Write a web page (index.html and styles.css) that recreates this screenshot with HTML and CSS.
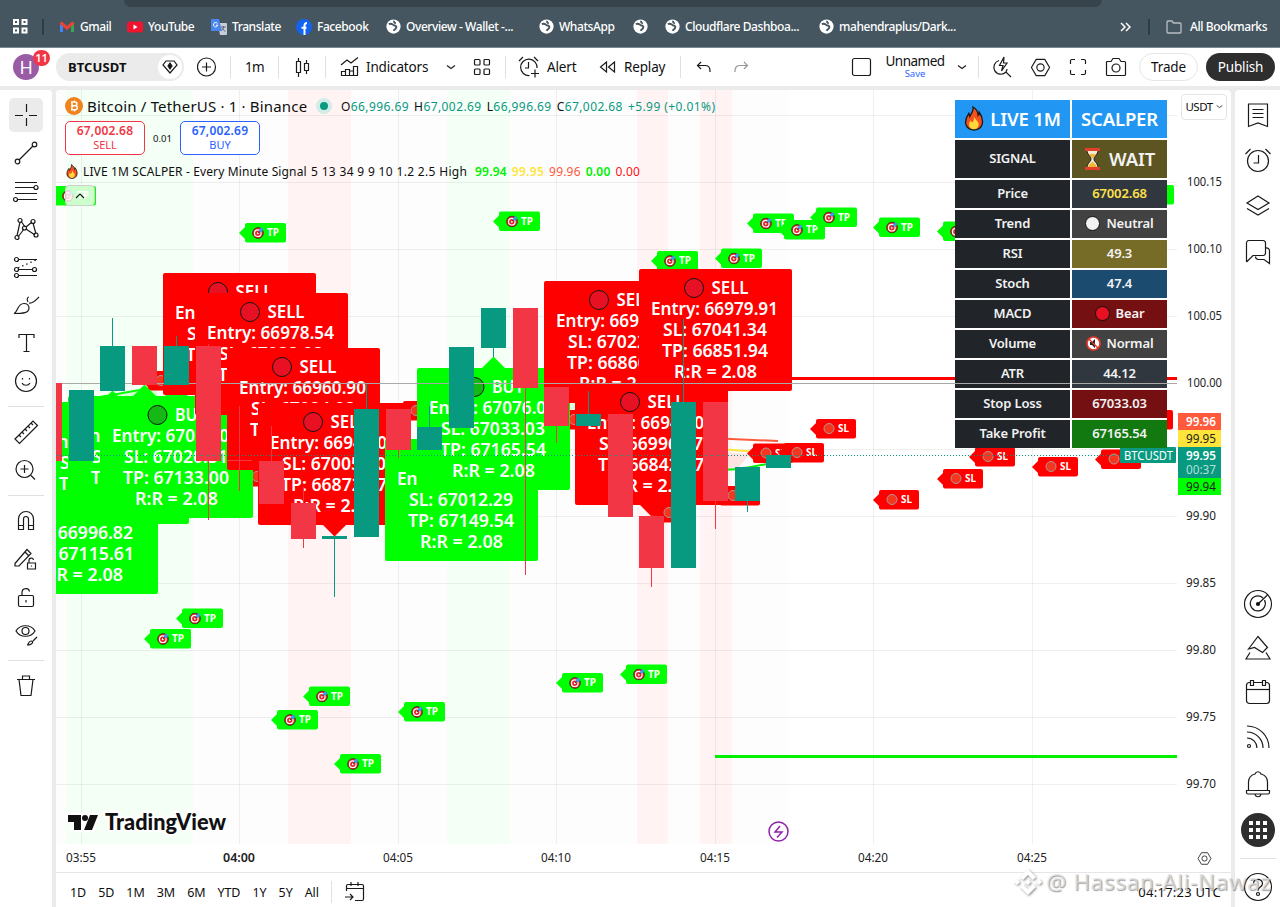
FILE: index.html
```html
<!DOCTYPE html>
<html lang="en">
  <head>
    <meta charset="UTF-8" />
    <title>BTCUSDT 67,002.68 - Unnamed</title>
    <link rel="stylesheet" href="styles.css">
  </head>
  <body>
    <!-- Shared symbols -->
    <svg class="defs">
      <symbol id="globe" viewBox="0 0 16 16">
        <circle cx="8" cy="8" r="7.6" fill="#fff" />
        <path d="M3 5.500c3-1.500 4 .5 5 1s3.500.5 3 2.500-2 2-3 3.500M9 2c-1 1.500 0 2.500 1.500 2.500" fill="none" stroke="#455660" stroke-width="2" />
      </symbol>
      <symbol id="fire" viewBox="0 0 18 24">
        <path d="M8 1c5 3 5 6 5 8 1-1 1-2 1-3 3 4 3.500 8 3 11-1 4-4 6-8 6s-7-2-8-6c-.5-4 1-7 3-10l1 3C6 7 9 5 8 1z" fill="#f4511e" stroke="#1a1a1a" stroke-width="1.300" />
        <path d="M9 10c1 3 5 5 4.500 8-.5 3-2.500 4.300-4.500 4.300S4.500 21 4.200 18c0-2 1-3 1.500-4l1.500 2c1-1 2-3 1.800-6z" fill="#ffd83b" />
      </symbol>
      <symbol id="target" viewBox="0 0 12 12">
        <circle cx="6" cy="6" r="5.400" fill="#e5242a" stroke="#222" stroke-width=".7" />
        <circle cx="5.800" cy="6.200" r="3.300" fill="none" stroke="#fff" stroke-width="1.200" />
        <circle cx="5.800" cy="6.200" r="1" fill="#fff" />
        <path d="M6 6l3-3" stroke="#222" stroke-width=".8" />
        <path d="M6.500 4L9 .5l2.500 1.500L9.500 5.500z" fill="#3a9be8" />
      </symbol>
      <symbol id="chev" viewBox="0 0 10 10">
        <path d="M1 3.500l4 3 4-3" fill="none" stroke="#222" stroke-width="1.200" />
      </symbol>
      <symbol id="hex" viewBox="0 0 22 22">
        <path d="M6.500 2.500h9l5 8.500-5 8.500h-9L1.500 11z" />
        <circle cx="11" cy="11" r="3.800" />
      </symbol>
    </svg>

    <!-- Browser bookmarks -->
    <div class="bookmarks">
      <div class="tabstrip"></div>
      <svg width="15" height="15" viewBox="0 0 15 15"><g fill="none" stroke="#fff" stroke-width="2"><path d="M1 1h4v4H1zM9.500 1h4v4h-4zM1 9.500h4v4H1zM9.500 9.500h4v4h-4z" /></g></svg>
      <i class="bm-sep"></i>
      <div class="bm">
        <svg width="16" height="16" viewBox="0 0 16 16"><path d="M2.500 13V4" stroke="#4285f4" stroke-width="3" /><path d="M13.500 13V4" stroke="#34a853" stroke-width="3" /><path d="M1.500 3.500L8 9l6.500-5.500" fill="none" stroke="#ea4335" stroke-width="3" /></svg>
        <span>Gmail</span>
      </div>
      <div class="bm">
        <svg width="16" height="16" viewBox="0 0 16 16"><rect y="2.500" width="16" height="11" rx="2.500" fill="#f0142f" /><path d="M6.500 5.500v5l4-2.500z" fill="#fff" /></svg>
        <span>YouTube</span>
      </div>
      <div class="bm">
        <svg width="16" height="16" viewBox="0 0 16 16"><path d="M7 4h8a1 1 0 011 1v10a1 1 0 01-1 1H9z" fill="#c9ced4" /><path d="M10 8h5M12.500 7v1c0 2-1 3-2.500 4M11 9.500l3.500 3" stroke="#667" fill="none" /><path d="M1 0h7l3 12H1a1 1 0 01-1-1V1a1 1 0 011-1z" fill="#4a86f0" /><path d="M6.500 4.500a2.200 2.200 0 10.300 1.700H5" stroke="#fff" fill="none" /></svg>
        <span>Translate</span>
      </div>
      <div class="bm">
        <svg width="16" height="16" viewBox="0 0 16 16"><circle cx="8" cy="8" r="8" fill="#1263f0" /><path d="M8.500 16V6.500c0-1.800.8-2.500 2.500-2.500M5.500 8.800h5" stroke="#fff" stroke-width="2" fill="none" /></svg>
        <span>Facebook</span>
      </div>
      <div class="bm"><svg width="15" height="15"><use href="#globe" /></svg><span>Overview - Wallet -...</span></div>
      <div class="bm"><svg width="15" height="15"><use href="#globe" /></svg><span>WhatsApp</span></div>
      <div class="bm"><svg width="15" height="15"><use href="#globe" /></svg></div>
      <div class="bm"><svg width="15" height="15"><use href="#globe" /></svg><span>Cloudflare Dashboa...</span></div>
      <div class="bm"><svg width="15" height="15"><use href="#globe" /></svg><span>mahendraplus/Dark...</span></div>
      <svg width="12" height="10" viewBox="0 0 12 10"><path d="M2 1l4 4-4 4M7 1l4 4-4 4" fill="none" stroke="#fff" stroke-width="1.500" /></svg>
      <i class="bm-sep"></i>
      <div class="bm bm-all">
        <svg width="16" height="14" viewBox="0 0 16 14"><path d="M1 2a1 1 0 011-1h4l1.500 2H14a1 1 0 011 1v8a1 1 0 01-1 1H2a1 1 0 01-1-1z" fill="none" stroke="#b9bfc3" stroke-width="1.300" /></svg>
        <span>All Bookmarks</span>
      </div>
    </div>

    <!-- Top toolbar -->
    <div class="toolbar">
      <div class="avatar">H<span class="badge">11</span></div>
      <div class="symbol-pill">
        <b>BTCUSDT</b>
        <span class="gem"><svg class="ico" width="16" height="14" viewBox="0 0 16 14"><path d="M4 1h8l3 4-7 8-7-8z" /><path d="M8 3l2 3-2 3-2-3z" fill="#111" /></svg></span>
      </div>
      <svg class="ico" width="20" height="20" viewBox="0 0 20 20"><circle cx="9.500" cy="10" r="9" /><path d="M9.500 5.500v9M5 10h9" /></svg>
      <i class="sep"></i>
      <span class="interval">1m</span>
      <i class="sep"></i>
      <svg class="ico" width="17" height="20" viewBox="0 0 17 20"><path d="M2.500 4.500h4v11h-4zM4.500 1v3.500M4.500 15.500V20M10.500 6.500h4v7h-4zM12.500 3v3.500M12.500 13.500V17" /></svg>
      <i class="sep"></i>
      <div class="tbtn">
        <svg class="ico" width="19" height="20" viewBox="0 0 19 20"><path d="M1 8l6-5 4 3 7-5.500M1.500 18.500v-4h4v4zM5.500 18.500v-6h4v6zM9.500 18.500V14h4v4.500zM13.500 18.500V9.500h4v9z" /></svg>
        <span class="t-ind">Indicators</span>
      </div>
      <svg width="10" height="10"><use href="#chev" /></svg>
      <svg class="ico" width="18" height="18" viewBox="0 0 18 18"><rect x="1.500" y="1.500" width="5.500" height="5.500" rx="1" /><rect x="11" y="1.500" width="5.500" height="5.500" rx="1" /><rect x="1.500" y="11" width="5.500" height="5.500" rx="1" /><rect x="11" y="11" width="5.500" height="5.500" rx="1" /></svg>
      <i class="sep"></i>
      <div class="tbtn">
        <svg class="ico" width="22" height="22" viewBox="0 0 22 22"><path d="M11.500 19.500A8.200 8.200 0 1119 12M10.500 6v6H7M1 5l4-4M16 1l4 4M17 13.500v8M13 17.500h8" /></svg>
        <span>Alert</span>
      </div>
      <div class="tbtn">
        <svg class="ico" width="18" height="14" viewBox="0 0 18 14"><path d="M7.500 2v10L1.500 7zM15.500 2v10l-6-5z" /></svg>
        <span>Replay</span>
      </div>
      <i class="sep"></i>
      <svg class="ico" width="15" height="14" viewBox="0 0 15 14"><path d="M5 2L1.500 5.500 5 9M1.500 5.500H9c3 0 5 2 5 5V12" /></svg>
      <svg class="ico faded" width="15" height="14" viewBox="0 0 15 14"><path d="M10 2l3.500 3.500L10 9M13.500 5.500H6c-3 0-5 2-5 5V12" /></svg>
      <svg class="ico" width="21" height="20" viewBox="0 0 21 20"><rect x="1.500" y="1.500" width="18" height="17" rx="2" /></svg>
      <div class="layout-name"><span>Unnamed</span><a>Save</a></div>
      <svg width="10" height="10"><use href="#chev" /></svg>
      <i class="sep"></i>
      <svg class="ico" width="20" height="22" viewBox="0 0 20 22"><path d="M7 4.500a7 7 0 107 11.500l5 5M15 13a7 7 0 01-1 3M12 1L7.500 9.500h3.500L9.500 15l5.500-8h-3.500z" /></svg>
      <svg class="ico" width="21" height="21"><use href="#hex" /></svg>
      <svg class="ico" width="18" height="18" viewBox="0 0 18 18"><path d="M1.500 6V3a1.500 1.500 0 011.500-1.500h3M12 1.500h3A1.500 1.500 0 0116.500 3v3M16.500 12v3a1.500 1.500 0 01-1.500 1.500h-3M6 16.500H3A1.500 1.500 0 011.500 15v-3" /></svg>
      <svg class="ico" width="22" height="20" viewBox="0 0 22 20"><path d="M2.500 4.500H6L8 1.500h6l2 3h3.500a1 1 0 011 1v12a1 1 0 01-1 1h-17a1 1 0 01-1-1v-12a1 1 0 011-1z" /><circle cx="11" cy="11" r="4" /></svg>
      <div class="trade">Trade</div>
      <div class="publish">Publish</div>
    </div>

    <div class="workspace">
      <!-- Drawing tools -->
      <div class="rail rail-left">
        <div class="tool active"><svg class="ico" width="26" height="26" viewBox="0 0 26 26"><path d="M13.500 2v8M13.500 16v8M2 13.500h8M16 13.500h8" /></svg></div>
        <div class="tool"><svg class="ico" width="26" height="26" viewBox="0 0 26 26"><circle cx="4.500" cy="21.500" r="2.300" /><circle cx="21.500" cy="4.500" r="2.300" /><path d="M6 20L20 6" /></svg></div>
        <div class="tool"><svg class="ico" width="26" height="26" viewBox="0 0 26 26"><path d="M2 4.500h22M2 9.500h19M2 15.500h22M5 21.500h19" /><circle cx="23" cy="9.500" r="2" /><circle cx="2.500" cy="21.500" r="2" /></svg></div>
        <div class="tool"><svg class="ico" width="26" height="26" viewBox="0 0 26 26"><path d="M4 20L7 6M8 5l4 6M13 11l6-5M20 7l3 11M5 21l6-8M13 13l9 6" /><circle cx="4" cy="21.500" r="2" /><circle cx="7" cy="4.500" r="2" /><circle cx="11.500" cy="12" r="2" /><circle cx="20" cy="5.500" r="2" /><circle cx="23" cy="19" r="2" /></svg></div>
        <div class="tool"><svg class="ico" width="26" height="26" viewBox="0 0 26 26"><path d="M5 5.500h19M5 15.500h15M5 21.500h19" /><path d="M5 14L23 6" stroke-dasharray="1.500 3" /><circle cx="3.500" cy="5.500" r="2" /><circle cx="3.500" cy="15.500" r="2" /><circle cx="21.500" cy="15.500" r="2" /><circle cx="3.500" cy="21.500" r="2" /></svg></div>
        <div class="tool"><svg class="ico" width="28" height="26" viewBox="0 0 28 26"><path d="M2 21.500c4-1 3-10 10-10 3 0 5 2 5 4.500 0 5-6 5.500-15 5.500zM16 10c-2-3 0-5 1-5M17 11c4 1 8-4 10-6" /></svg></div>
        <div class="tool"><svg class="ico" width="26" height="26" viewBox="0 0 26 26"><path d="M6 8V4.500h15V8M13.500 4.500v17M10.500 21.500h6" /></svg></div>
        <div class="tool"><svg class="ico" width="26" height="26" viewBox="0 0 26 26"><circle cx="13" cy="13" r="10.500" /><path d="M9 15c1.500 3 6.500 3 8 0M9.500 10v1.500M16.500 10v1.500" /></svg></div>
        <i class="rule"></i>
        <div class="tool"><svg class="ico" width="26" height="26" viewBox="0 0 26 26"><path d="M2 20L20 2l4.500 4.500-18 18zM6 16l2 2M9 13l2 2M12 10l2 2M15 7l2 2M18 4l2 2" /></svg></div>
        <div class="tool"><svg class="ico" width="26" height="26" viewBox="0 0 26 26"><circle cx="11.500" cy="12" r="8.500" /><path d="M18 18.500l4 4M11.500 8v8M7.500 12h8" /></svg></div>
        <i class="rule"></i>
        <div class="tool"><svg class="ico" width="26" height="26" viewBox="0 0 26 26"><path d="M5.500 21.500V11a7.500 7.500 0 0115 0v10.500h-5V11a2.500 2.500 0 00-5 0v10.500zM5.500 17.500h5M15.500 17.500h5" /></svg></div>
        <div class="tool"><svg class="ico" width="26" height="26" viewBox="0 0 26 26"><path d="M2 17.500L14 3.500l4 4L6 20H2zM12 6l4 4M14.500 17h8v6h-8zM16 17v-2.500c0-3 4-3 4.500-.5M18.500 19.500v1" /></svg></div>
        <div class="tool"><svg class="ico" width="26" height="26" viewBox="0 0 26 26"><rect x="5.500" y="11.500" width="15" height="11" rx="1.500" /><path d="M9 11.500V8.500c0-5 7-5 7.500-1M13 16v2.500" /></svg></div>
        <div class="tool"><svg class="ico" width="26" height="26" viewBox="0 0 26 26"><path d="M3 9c4-7 15-7 19 0-4 7-15 7-19 0z" /><circle cx="12.500" cy="9" r="3.500" /><path d="M14 23c2 0 1-4 4-4 3 0 2 4-4 4zM20 19l4-4" /></svg></div>
        <i class="rule"></i>
        <div class="tool"><svg class="ico" width="26" height="26" viewBox="0 0 26 26"><path d="M4 6.500h18M6 6.500L8 22.500h10L20 6.500M9.500 6.500V3h7v3.500" /></svg></div>
      </div>

      <!-- Chart -->
      <div class="chart">
        <div class="canvas">
          <svg id="plot" viewBox="56 90 1175 782"></svg>

          <div class="legend">
            <div class="legend-title">
              <svg width="18" height="18" viewBox="0 0 18 18"><circle cx="9" cy="9" r="9" fill="#f0831e" /><path d="M7 4.500v9M6 5h4c2.500 0 2.500 3.700 0 3.700H7h3.500c2.500 0 2.500 4-.5 4H6M9.500 3.500v2M9.500 12.500v2" fill="none" stroke="#fff" stroke-width="1.500" /></svg>
              <span class="pair">Bitcoin / TetherUS · 1 · Binance</span>
              <i class="dot"></i>
              <span class="ohlc">O<em>66,996.69</em></span>
              <span class="ohlc">H<em>67,002.69</em></span>
              <span class="ohlc">L<em>66,996.69</em></span>
              <span class="ohlc">C<em>67,002.68</em></span>
              <span class="ohlc"><em>+5.99 (+0.01%)</em></span>
            </div>
            <div class="legend-trade">
              <div class="quote sell"><b>67,002.68</b><span>SELL</span></div>
              <span class="spread">0.01</span>
              <div class="quote buy"><b>67,002.69</b><span>BUY</span></div>
            </div>
            <div class="legend-study">
              <svg width="12" height="15"><use href="#fire" /></svg>
              <span class="study-name">LIVE 1M SCALPER - Every Minute Signal</span>
              <span class="study-args">5 13 34 9 9 10 1.2 2.5 High</span>
              <b class="lime">99.94</b>
              <b class="yellow">99.95</b>
              <span class="coral">99.96</span>
              <b class="lime">0.00</b>
              <span class="red">0.00</span>
            </div>
            <div class="collapse"><svg class="ico" width="10" height="6" viewBox="0 0 10 6"><path d="M1 5l4-4 4 4" /></svg></div>
          </div>

          <div class="currency">USDT <svg width="7" height="7"><use href="#chev" /></svg></div>

          <div class="panel">
            <div class="head"><svg width="20" height="25"><use href="#fire" /></svg>LIVE 1M</div><div class="head">SCALPER</div>
            <div class="sig">SIGNAL</div>
            <div class="sig olive big">
              <svg width="17" height="22" viewBox="0 0 17 22"><path d="M3 2c0 5 4 6 4 9s-4 4-4 9h11c0-5-4-6-4-9s4-4 4-9z" fill="#f3ead0" stroke="#222" /><path d="M5 6h7l-3 4h-1zM4 19c1-3 4-4 4.500-6 .5 2 3.500 3 4.500 6z" fill="#f2b632" /><path d="M1 0h15v3H1zM1 19h15v3H1z" fill="#e0402c" /></svg>
              WAIT
            </div>
            <div>Price</div><div class="slate gold">67002.68</div>
            <div>Trend</div><div class="grey"><i class="ball white"></i>Neutral</div>
            <div>RSI</div><div class="khaki">49.3</div>
            <div>Stoch</div><div class="blue">47.4</div>
            <div>MACD</div><div class="maroon"><i class="ball crimson"></i>Bear</div>
            <div>Volume</div>
            <div class="grey">
              <svg class="muted" width="15" height="15" viewBox="0 0 15 15"><circle cx="7.500" cy="7.500" r="6.500" fill="#fff" stroke="#e23a2e" stroke-width="1.700" /><path d="M4 6h2l3-3v9L6 9H4z" fill="#222" /><path d="M3 3l9 9" stroke="#e23a2e" stroke-width="1.500" /></svg>Normal
            </div>
            <div class="atr">ATR</div><div class="slate atr">44.12</div>
            <div>Stop Loss</div><div class="maroon">67033.03</div>
            <div>Take Profit</div><div class="green">67165.54</div>
          </div>
        </div>

        <div class="ranges">
          <span>1D</span><span>5D</span><span>1M</span><span>3M</span><span>6M</span><span>YTD</span><span>1Y</span><span>5Y</span><span>All</span>
          <i class="sep"></i>
          <svg class="ico" width="22" height="22" viewBox="0 0 22 22"><path d="M2.500 10V5a1.500 1.500 0 011.500-1.500h14A1.500 1.500 0 0119.500 5v13a1.500 1.500 0 01-1.500 1.500h-7M2.500 7.500h17M7 1v4M14 1v4M1 16h8M6 13l3 3-3 3" /></svg>
          <span class="clock">04:17:23 UTC</span>
        </div>
      </div>

      <!-- Widgets -->
      <div class="rail rail-right">
        <div class="tool"><svg class="ico" width="28" height="28" viewBox="0 0 28 28"><path d="M4.500 3h19v22.500L14 22l-9.500 3.500zM8.500 8.500h11M8.500 12.500h11M8.500 16.500h11" /></svg></div>
        <div class="tool"><svg class="ico" width="28" height="28" viewBox="0 0 28 28"><circle cx="14" cy="14" r="10.500" /><path d="M14.500 8v8H9.500M1.500 7l5-5M21.500 2l5 5" /></svg></div>
        <div class="tool"><svg class="ico" width="28" height="28" viewBox="0 0 28 28"><path d="M14 4l11 7-11 6.500L3 11zM3 16.500L14 23l11-6.500" /></svg></div>
        <div class="tool"><svg class="ico" width="28" height="28" viewBox="0 0 28 28"><path d="M2.500 24V4.500A2.500 2.500 0 015 2.500h14a2.500 2.500 0 012.500 2.500V15a2.500 2.500 0 01-2.500 2.500H9L2.500 24M21.500 10a3 3 0 014 3v12.500L20 21.500h-6a3 3 0 01-2.500-3" /></svg></div>
        <div class="tool push"><svg class="ico" width="30" height="30" viewBox="0 0 30 30"><circle cx="15" cy="15" r="13.500" /><path d="M20 9a7.500 7.500 0 101.500 2M15 15l9.500-9" /><circle cx="15" cy="15" r="1.500" fill="#111" /></svg></div>
        <div class="tool"><svg class="ico" width="28" height="28" viewBox="0 0 28 28"><path d="M4.500 15L14 2.500l9.500 11-5 5-8-5zM6 18.500l-4 6.500h24l-4-6.500" /></svg></div>
        <div class="tool"><svg class="ico" width="28" height="28" viewBox="0 0 28 28"><rect x="2.500" y="3.500" width="23" height="21" rx="3" /><path d="M2.500 10.500h23" /><path d="M6.500 1.500h3v5h-3zM18.500 1.500h3v5h-3z" fill="#fff" /></svg></div>
        <div class="tool rss"><svg class="ico" width="28" height="28" viewBox="0 0 28 28"><path d="M3 2a22 22 0 0122 22M3 8a16 16 0 0116 16M3 14a10 10 0 0110 10" /><circle cx="5" cy="22" r="1.500" /></svg></div>
        <div class="tool"><svg class="ico" width="28" height="30" viewBox="0 0 28 30"><path d="M2.500 20.500h23v2a1.500 1.500 0 01-1.500 1.500H4a1.500 1.500 0 01-1.500-1.500zM4.500 20.500V12c0-4 3-7 6.500-8 1-3 5-3 6 0 3.500 1 6.500 4 6.500 8v8.500M11 24.500c1 3 5 3 6 0" /></svg></div>
        <div class="tool"><svg width="34" height="34" viewBox="0 0 34 34"><circle cx="17" cy="17" r="17" fill="#2e2e2e" /><path d="M8 10h18M8 17h18M8 24h18" stroke="#fff" stroke-width="4" stroke-dasharray="4 3" /></svg></div>
        <i class="rule"></i>
        <div class="tool help"><svg class="ico" width="30" height="30" viewBox="0 0 30 30"><circle cx="15" cy="15" r="13.500" /><path d="M10.500 12c0-6 9-6 9-.5 0 3.500-4.500 3.500-4.500 7" /><circle cx="15" cy="22" r="1.500" /></svg></div>
      </div>
    </div>

    <div class="watermark">
      <svg width="28" height="28" viewBox="0 0 28 28"><path d="M6 9l8-8 8 8-3 3-5-5-5 5zM6 19l8 8 8-8-3-3-5 5-5-5zM0 14l3-3 3 3-3 3zM22 14l3-3 3 3-3 3zM11 14l3-3 3 3-3 3z" /></svg>
      <span>@ Hassan-Ali-Nawaz</span>
    </div>
    <script src="chart.js"></script>
  </body>
</html>
```

FILE: styles.css
```css
* {
  box-sizing: border-box;
}
body {
  margin: 0;
  width: 1280px;
  height: 907px;
  overflow: hidden;
  position: relative;
  display: flex;
  flex-direction: column;
  background: #ebebeb;
  color: #0f0f0f;
  font-family: 'Noto Sans', 'Open Sans', sans-serif;
}
svg {
  display: block;
  flex: none;
}
.defs {
  position: absolute;
  width: 0;
  height: 0;
}
.ico {
  fill: none;
  stroke: #1a1a1a;
  stroke-width: 1.2;
}
.faded {
  opacity: 0.45;
}

/* bookmarks */
.bookmarks {
  position: relative;
  height: 48px;
  flex: none;
  padding: 7px 0 1px 13px;
  background: #455660;
  border-bottom: 1px solid #7b8890;
  display: grid;
  grid-template-columns: 29px 17px 68px 84px 85px 90px 153px 94px 32px 154px 300px 29px 18px 1fr;
  align-items: center;
  color: #fff;
  font-size: 12px;
  font-weight: 500;
  letter-spacing: -0.42px;
}
.tabstrip {
  position: absolute;
  left: 124px;
  top: 0;
  width: 978px;
  height: 7px;
  background: #38444c;
  border-radius: 0 0 9px 9px;
}
.bm {
  display: flex;
  align-items: center;
  gap: 5px;
  white-space: nowrap;
}
.bm-all {
  gap: 8px;
}
.bm-sep {
  width: 2px;
  height: 16px;
  background: #2f3c44;
}

/* toolbar */
.toolbar {
  height: 38px;
  flex: none;
  padding-left: 13px;
  background: #fff;
  display: grid;
  grid-template-columns:
    43px 141px 33px 15px 33px 16px 31px 15px 106px 27px 32px 13px 81px 81px
    16px 38px 117px 35px 71px 21px 14px 38px 39px 36px 34px 67px 69px;
  align-items: center;
  font-size: 13.5px;
  letter-spacing: -0.15px;
}
.toolbar .sep,
.ranges .sep {
  width: 1px;
  height: 22px;
  background: #e0e0e0;
}
.interval {
  letter-spacing: -0.8px;
}
.avatar {
  position: relative;
  width: 26px;
  height: 26px;
  border-radius: 50%;
  background: #9a5ba5;
  color: #fff;
  font-size: 18px;
  line-height: 26px;
  text-align: center;
}
.badge {
  position: absolute;
  left: 20px;
  top: -4px;
  width: 17px;
  height: 16px;
  border-radius: 8px;
  background: #f23645;
  font-size: 11px;
  font-weight: 600;
  line-height: 16px;
}
.symbol-pill {
  width: 128px;
  height: 28px;
  padding: 0 2px 0 12px;
  border-radius: 14px;
  background: #ebebeb;
  display: flex;
  align-items: center;
  justify-content: space-between;
  font-size: 13px;
  letter-spacing: 0.1px;
}
.gem {
  width: 24px;
  height: 24px;
  border-radius: 50%;
  background: #fff;
  display: flex;
  align-items: center;
  justify-content: center;
}
.tbtn {
  display: flex;
  align-items: center;
  gap: 7px;
}
.layout-name {
  width: 58px;
  display: flex;
  flex-direction: column;
  align-items: center;
  line-height: 15px;
  margin-top: -1px;
}
.layout-name span {
  letter-spacing: -0.5px;
}
.layout-name a {
  color: #2962ff;
  font-size: 9.5px;
  letter-spacing: 0;
  line-height: 10px;
}
.trade,
.publish {
  height: 28px;
  border-radius: 14px;
  text-align: center;
  line-height: 26px;
}
.trade {
  width: 59px;
  border: 1px solid #e6e6e6;
}
.publish {
  width: 69px;
  background: #2e2e2e;
  color: #fff;
  line-height: 28px;
}

/* layout */
.workspace {
  flex: 1;
  min-height: 0;
  padding-top: 4px;
  display: flex;
  gap: 4px;
}
.rail {
  background: #fff;
  display: flex;
  flex-direction: column;
  align-items: center;
}
.rail-left {
  width: 52px;
  padding-top: 6px;
  border-radius: 0 4px 0 0;
}
.rail-left .tool {
  width: 34px;
  height: 38px;
}
.tool {
  display: flex;
  align-items: center;
  justify-content: center;
  flex: none;
}
.rail-left .active {
  height: 34px;
  margin: 2px 0;
  border-radius: 5px;
  background: #ebebeb;
}
.rule {
  width: 36px;
  height: 1px;
  margin: 6px 0;
  background: #e0e0e0;
  flex: none;
}
.rail-right {
  width: 45px;
  padding-top: 2px;
  border-radius: 4px 0 0 0;
}
.rail-right .tool {
  height: 45.7px;
}
.rail-right .push {
  height: 43px;
  margin-top: auto;
}
.rail-right .push ~ .tool {
  height: 45px;
}
.rail-right .rss {
  margin-bottom: 2px;
}
.rail-right .rule {
  margin: 6px 0 8px;
}
.rail-right .push ~ .help {
  height: 40px;
}
.chart {
  width: 1175px;
  background: #fff;
  border-radius: 4px 4px 0 0;
  overflow: hidden;
  display: flex;
  flex-direction: column;
}
.canvas {
  position: relative;
  height: 782px;
}
#plot {
  width: 1175px;
  height: 782px;
}

/* legend over the plot */
.legend {
  position: absolute;
  left: 9px;
  top: 6px;
}
.legend-title {
  height: 20px;
  margin-bottom: 1px;
  display: flex;
  align-items: center;
  white-space: nowrap;
}
.pair {
  width: 222px;
  margin-left: 4px;
  font-size: 15px;
  letter-spacing: 0.18px;
}
.dot {
  width: 16px;
  height: 16px;
  margin: 0 9px 0 7px;
  border-radius: 50%;
  border: 4px solid #d3ece7;
  background: #089981;
}
.ohlc {
  font-size: 12px;
  letter-spacing: 0.42px;
  margin-right: 5px;
}
.ohlc em {
  font-style: normal;
  color: #089981;
}
.legend-trade {
  margin-top: 5px;
  display: flex;
  align-items: center;
}
.quote {
  width: 80px;
  height: 34px;
  border: 1px solid;
  border-radius: 5px;
  background: #fff;
  display: flex;
  flex-direction: column;
  align-items: center;
  justify-content: center;
  font-size: 12px;
  line-height: 14px;
  letter-spacing: 0.2px;
}
.quote b {
  font-weight: 600;
}
.quote span {
  font-size: 11px;
  letter-spacing: 0;
}
.sell {
  color: #f23645;
}
.buy {
  color: #2962ff;
}
.spread {
  width: 35px;
  text-align: center;
  font-size: 9.5px;
}
.legend-study {
  height: 17px;
  margin-top: 8px;
  padding-left: 1px;
  display: flex;
  align-items: center;
  gap: 5px;
  font-size: 12px;
  white-space: nowrap;
}
.study-name {
  width: 223px;
  letter-spacing: 0.13px;
}
.study-args {
  width: 159px;
  letter-spacing: 0.33px;
}
.legend-study b {
  font-weight: 600;
}
.coral,
.red {
  letter-spacing: 0.2px;
}
.lime {
  color: #00f000;
  letter-spacing: 0.2px;
}
.yellow {
  color: #ffe53b;
  letter-spacing: 0.3px;
}
.coral {
  color: #ff5a3c;
}
.red {
  color: #ff1010;
}
.collapse {
  width: 30px;
  height: 21px;
  margin-top: 5px;
  border: 1px solid #d0d0d0;
  border-radius: 4px;
  background: rgba(255, 255, 255, 0.8);
  display: flex;
  align-items: center;
  justify-content: center;
}
.currency {
  position: absolute;
  left: 1125px;
  top: 4px;
  width: 46px;
  height: 26px;
  padding-bottom: 1px;
  border: 1px solid #e4e4e4;
  border-radius: 4px;
  background: #fff;
  display: flex;
  align-items: center;
  justify-content: center;
  gap: 3px;
  font-size: 11.5px;
  letter-spacing: -0.5px;
}

/* scalper table */
.panel {
  position: absolute;
  left: 899px;
  top: 10px;
  display: grid;
  grid-template-columns: 115px 95px;
  grid-auto-rows: 28px;
  grid-template-rows: 38px 38px;
  gap: 2px;
  background: #fff;
  color: #f2f2f2;
  font-size: 13px;
  font-weight: 600;
  letter-spacing: -0.15px;
}
.panel > div {
  padding-bottom: 2px;
  display: flex;
  align-items: center;
  justify-content: center;
  background: #212529;
  white-space: nowrap;
}
.panel > .head {
  background: #2196f3;
  color: #fff;
  font-size: 18.5px;
  gap: 6px;
}
.panel > .big {
  padding-bottom: 1px;
  font-size: 18.5px;
  gap: 8px;
}
.panel > .olive { background: #5d5521; }
.panel > .slate { background: #30373e; }
.panel > .gold { color: #ffe04a; }
.panel > .grey { background: #424242; }
.panel > .khaki { background: #766b27; }
.panel > .blue { background: #1c4b70; }
.panel > .maroon { background: #741012; }
.panel > .green { background: #11790f; }
.panel > .atr {
  background-image: linear-gradient(#a9a9a9, #a9a9a9);
  background-size: 100% 1px;
  background-position: 0 23px;
  background-repeat: no-repeat;
}
.ball {
  width: 15px;
  height: 15px;
  margin-right: 6px;
  border: 1px solid #111;
  border-radius: 50%;
}
.white { background: #f2f2f2; }
.crimson { background: #e81123; }
.muted { margin-right: 6px; }

/* bottom bar */
.ranges {
  flex: 1;
  padding: 4px 10px 0 14px;
  border-top: 1px solid #e6e6e6;
  display: flex;
  align-items: center;
  gap: 12.1px;
  font-size: 12.5px;
  letter-spacing: -0.1px;
}
.clock {
  margin-left: auto;
  font-size: 13px;
  letter-spacing: 0.25px;
}

/* text drawn on the plot */
.axis {
  font-size: 12.5px;
  fill: #222;
}
.big-label {
  font-size: 18px;
  font-weight: 600;
  fill: #fff;
}
.tag {
  font-size: 10px;
  font-weight: 700;
  fill: #fff;
}
.brand {
  font-family: Lato, sans-serif;
  font-size: 22px;
  font-weight: 900;
  fill: #111;
  stroke: #fff;
  stroke-width: 5px;
  stroke-linejoin: round;
  paint-order: stroke;
}

.watermark {
  position: absolute;
  left: 1014px;
  top: 866px;
  display: flex;
  align-items: center;
  gap: 4px;
  font-size: 22.5px;
  line-height: 32px;
  letter-spacing: 0.6px;
  white-space: nowrap;
  color: rgba(225, 225, 225, 0.75);
  text-shadow: 1px 1px 1px rgba(90, 90, 90, 0.6);
}
.watermark svg {
  fill: #fff;
  filter: drop-shadow(1px 1px 1px rgba(90, 90, 90, 0.7));
}
```

FILE: chart.js
```js
const plot = document.getElementById('plot')
const RED = '#f23645'
const GREEN = '#089981'
let out = ''

function rect(x, y, w, h, fill, rx = 0) {
  out += `<rect x="${x}" y="${y}" width="${w}" height="${h}" fill="${fill}" rx="${rx}"/>`
}

function text(cls, x, y, str, width, extra = '') {
  const len = width ? `textLength="${width}" lengthAdjust="spacingAndGlyphs"` : ''
  out += `<text class="${cls}" x="${x}" y="${y}" ${len} ${extra}>${str}</text>`
}

out += '<clipPath id="pane"><rect x="56" y="90" width="1121" height="754"/></clipPath><g clip-path="url(#pane)">'
rect(56, 90, 732, 754, '#fdfdfd')

// session bands
rect(66, 90, 127, 754, '#f4fff6')
rect(288, 90, 63, 754, '#fff4f3')
rect(447, 90, 63, 754, '#f4fff6')
rect(637, 90, 31, 754, '#fff4f3')
rect(700, 90, 32, 754, '#fff4f3')

// grid
const times = [[81, '03:55'], [239, '04:00'], [398, '04:05'], [556, '04:10'], [715, '04:15'], [873, '04:20'], [1032, '04:25']]
const prices = [[115, ''], [182, '100.15'], [249, '100.10'], [316, '100.05'], [383, '100.00'], [449, ''], [516, '99.90'], [583, '99.85'], [650, '99.80'], [717, '99.75'], [784, '99.70']]
times.forEach(([x]) => rect(x, 90, 1, 754, 'rgba(0,0,0,.06)'))
prices.forEach(([y]) => rect(56, y, 1121, 1, 'rgba(0,0,0,.06)'))

// moving averages
out += '<path d="M100 397L157 386V397z" fill="#d9ffd9"/><path d="M100 397L157 387" stroke="#00ff00" stroke-width="2"/>'
rect(568, 400, 9, 14, '#dcfbe4')
out += '<path d="M720 452l30 2-12 14-18 2z" fill="#ffe3e1"/>'
out += '<path d="M720 438.500l58 2.500" stroke="#ff5a3c" stroke-width="2"/><path d="M720 449l50 4" stroke="#ffe53b" stroke-width="2"/><path d="M720 470l20-1 38-7" stroke="#0e0" stroke-width="2" fill="none"/>'

// take profit / stop loss lines
rect(792, 377, 385, 3, '#ff0000')
rect(715, 755, 462, 3, '#00f000')

// small tags, placed by the icon centre
const tp = [[68, 196], [258, 233], [512, 221.5], [766, 223.5], [797, 230], [829, 217.5], [892, 227.5], [956, 231.5], [1146, 195], [670, 261], [734, 258.5],
  [195, 618.5], [163, 639], [322, 696.5], [290, 720], [417, 712], [353, 764], [575, 683], [639, 674.5]]
const sl = [[161, 381], [257, 477], [416, 411], [574, 420], [669, 513], [733, 496], [766, 453.5], [797, 453], [829, 429], [892, 500], [956, 479],
  [988, 457], [1051, 467], [1114, 459.5], [1146, 420]]

function tag(cx, cy, color, w) {
  rect(cx - 13, cy - 10, w, 19.5, color, 2)
  out += `<path d="M${cx - 19} ${cy}l7-7v14z" fill="${color}"/>`
}
tp.forEach(([x, y]) => {
  tag(x, y, '#00ff00', 41)
  out += `<use href="#target" x="${x - 6}" y="${y - 6}" width="12" height="12"/>`
  text('tag', x + 9, y + 3, 'TP', 12)
})
sl.forEach(([x, y]) => {
  tag(x, y, '#ff0000', 40)
  out += `<circle cx="${x}" cy="${y - 0.5}" r="5" fill="#f4371f" stroke="#a99" stroke-width="1"/>`
  text('tag', x + 9, y + 3, 'SL', 11)
})

// entry labels: centre x, top, side, lines
const labels = [
  [81.5, 472, 'BUY', '66996.82', '66996.82', '67115.61'],
  [112.5, 402, 'BUY', '67049.66', '67012.31', '67127.00'],
  [144.5, 396, 'BUY', '67055.70', '67020.31', '67133.00'],
  [176.5, 396, 'BUY', '67057.09', '67020.31', '67133.00'],
  [239.5, 273, 'SELL', '66987.54', '67038.08', '66900.10'],
  [271.5, 293, 'SELL', '66978.54', '67038.08', '66900.10'],
  [303.5, 348, 'SELL', '66960.90', '67024.08', '66880.10'],
  [334.5, 403, 'SELL', '66941.01', '67005.00', '66872.17'],
  [461.5, 439, 'BUY', '67057.04', '67012.29', '67149.54'],
  [493.5, 368, 'BUY', '67076.04', '67033.03', '67165.54'],
  [620.5, 281, 'SELL', '66976.91', '67022.34', '66860.94'],
  [651.5, 383, 'SELL', '66944.04', '66996.07', '66842.07'],
  [715.5, 269, 'SELL', '66979.91', '67041.34', '66851.94']
]
labels.forEach(([cx, top, side, entry, stop, take]) => {
  const buy = side === 'BUY'
  const color = buy ? '#00ff00' : '#ff0000'
  rect(cx - 76.5, top, 153, 122, color, 2)
  out += buy
    ? `<path d="M${cx - 12} ${top + 0.5}l12-12 12 12z" fill="${color}"/>`
    : `<path d="M${cx - 12} ${top + 121.5}l12 12 12-12z" fill="${color}"/>`
  out += `<circle cx="${cx - (buy ? 19 : 21.5)}" cy="${top + 19}" r="9.5" fill="${buy ? '#16b816' : '#e81123'}" stroke="#141414" stroke-width="1"/>`
  text('big-label', cx - (buy ? 1.5 : 4), top + 25, side, buy ? 32 : 37)
  text('big-label', cx - 64.5, top + 46, 'Entry: ' + entry, 127)
  text('big-label', cx - 52.5, top + 67, 'SL: ' + stop, 104)
  text('big-label', cx - 53.5, top + 88, 'TP: ' + take, 106)
  text('big-label', cx - 41.5, top + 109, 'R:R = 2.08', 83)
})

// last close and crosshair level
rect(56, 383, 1121, 1, '#a9a9a9')

// candles: left, open/close top, bottom, wick top, wick bottom, up
const candles = [
  [37, 383, 461, 383, 461, 0], [69, 390, 461, 390, 461, 1], [100, 346, 391, 318, 391, 1], [132, 346, 385, 346, 385, 0],
  [164, 346, 385, 336, 385, 1], [196, 346, 461, 344, 520, 0], [227, 460, 461, 406, 491, 0], [259, 461, 504, 426, 504, 0],
  [291, 503, 539, 487, 548, 0], [322, 536, 539, 536, 597, 1], [354, 409, 537, 384, 537, 1], [386, 409, 450, 409, 458, 0],
  [417, 427, 450, 406, 450, 1], [449, 347, 428, 347, 428, 1], [481, 308, 348, 308, 357, 1], [513, 308, 388, 308, 575, 0],
  [544, 387, 426, 387, 443, 0], [576, 414, 426, 391, 426, 1], [608, 414, 517, 414, 517, 0], [639, 516, 568, 516, 587, 0],
  [671, 402, 568, 319, 568, 1], [703, 402, 501, 402, 529, 0], [735, 467, 501, 467, 512, 1], [766, 455, 468, 455, 468, 1]
]
candles.forEach(([x, top, bottom, high, low, up]) => {
  const color = up ? GREEN : RED
  rect(x + 12, high, 1, low - high, color)
  rect(x, top, 25, bottom - top, color)
})
out += `<path d="M56 455.5H1120" stroke="${GREEN}" stroke-dasharray="1 2"/>`

// brand mark
out += '<path d="M68 815h13v15h-7v-8h-6zM90 815h8l-6 15h-8z" fill="#111" stroke="#fff" stroke-width="5" paint-order="stroke" stroke-linejoin="round"/><circle cx="85" cy="818" r="3" fill="#111"/>'
text('brand', 105, 830, 'TradingView', 121)
out += '<circle cx="778.5" cy="831.5" r="9.5" fill="#fff" stroke="#8e24aa" stroke-width="1.5"/><path d="M780 826l-5 6h7l-5 5.5" fill="none" stroke="#8e24aa" stroke-width="1.5"/>'
out += '</g>'

// scales
times.forEach(([x, t]) => text('axis', t === '04:00' ? x - 16 : x - 15, 862, t, t === '04:00' ? 32 : 30, t === '04:00' ? 'font-weight="600"' : ''))
prices.forEach(([y, p]) => p && text('axis', p.length > 5 ? 1187 : 1186, y + 4, p, p.length > 5 ? 35 : 30))
out += '<use href="#hex" x="1197" y="851" width="15" height="15" class="ico"/>'

// price markers
rect(1120, 447, 56, 16, GREEN, 1)
text('axis', 1124, 459.5, 'BTCUSDT', 49, 'style="fill:#fff"')
rect(1178, 413, 43, 17, '#ff5a3c')
rect(1178, 430, 43, 17, '#ffe53b')
rect(1178, 447, 43, 31, GREEN)
rect(1178, 478, 43, 17, '#00ff00')
text('axis', 1186, 426, '99.96', 30, 'style="fill:#fff;font-weight:600"')
text('axis', 1186, 443, '99.95', 30)
text('axis', 1186, 460, '99.95', 30, 'style="fill:#fff;font-weight:600"')
text('axis', 1186, 474, '00:37', 30, 'style="fill:#b5ded7"')
text('axis', 1186, 491, '99.94', 30)

plot.innerHTML = out
```
